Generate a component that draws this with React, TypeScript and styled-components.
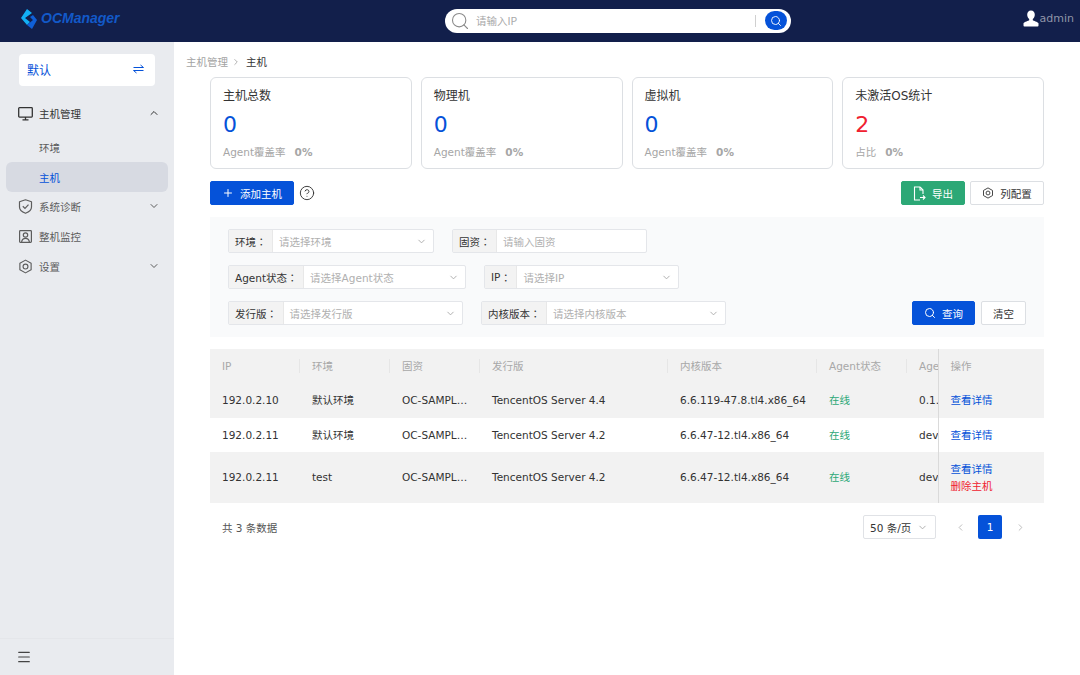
import React from 'react'
import styled, { createGlobalStyle } from 'styled-components'
import { ChevronDown, ChevronLeft, ChevronRight, ChevronUp, Plus, Search, CircleHelp, Menu } from 'lucide-react'

const FONT = `"DejaVu Sans", "Noto Sans CJK SC", sans-serif`

const GlobalStyle = createGlobalStyle`
  html, body {
    margin: 0;
    padding: 0;
    height: 100%;
    background: #fff;
    font-family: ${FONT};
  }
  * {
    box-sizing: border-box;
  }
`

const Page = styled.div`
  width: 1080px;
  height: 675px;
  display: flex;
  flex-direction: column;
  overflow: hidden;
`

const Header = styled.header`
  height: 42px;
  flex: none;
  background: #121f4b;
  display: grid;
  grid-template-columns: 425px 346px 1fr;
  align-items: center;
  padding: 0 6px 0 20px;
`

const LogoLink = styled.a`
  display: flex;
  align-items: center;
  gap: 3px;
  margin-top: -6px;
`

const LogoText = styled.span`
  font-family: "Liberation Sans", sans-serif;
  font-weight: 700;
  font-style: italic;
  font-size: 14px;
  color: #1259c8;
`

const SearchBar = styled.div`
  height: 24px;
  margin-top: -1px;
  border-radius: 12px;
  background: #fff;
  display: flex;
  align-items: center;
  padding: 0 4px 0 5px;
`

const SearchPlaceholder = styled.span`
  flex: 1;
  font-size: 10.5px;
  color: #a9a9a9;
  margin-left: 6px;
  font-family: "Noto Sans CJK SC", sans-serif;
`

const SearchDivider = styled.span`
  width: 1px;
  height: 12px;
  background: #d0d0d0;
  margin-right: 9px;
`

const SearchButton = styled.span`
  width: 22px;
  height: 19px;
  border-radius: 10px;
  background: #0552d9;
  color: #fff;
  display: flex;
  align-items: center;
  justify-content: center;
`

const UserBox = styled.div`
  justify-self: end;
  display: flex;
  align-items: center;
  gap: 1px;
  font-size: 11px;
  color: #8f95a8;
  margin-top: -6px;
`

const Body = styled.div`
  flex: 1;
  display: flex;
  min-height: 0;
`

const Sidebar = styled.aside`
  width: 174px;
  flex: none;
  background: #e9ebef;
  display: flex;
  flex-direction: column;
  padding: 12px 6px 0;
`

const EnvSwitch = styled.div`
  height: 32px;
  margin: 0 13px;
  background: #fff;
  border-radius: 4px;
  display: flex;
  align-items: center;
  justify-content: space-between;
  padding: 0 11px 2px 8px;
  font-size: 12px;
  color: #0552d9;
`

const NavList = styled.nav`
  margin-top: 13px;
  flex: 1;
  display: flex;
  flex-direction: column;
`

const SubNav = styled.div`
  padding-top: 3px;
`

const NavItem = styled.div<{ $open?: boolean }>`
  height: 30px;
  display: flex;
  align-items: center;
  gap: 6px;
  padding: 0 8px 2px 12px;
  font-size: 10.5px;
  color: ${({ $open }) => ($open ? '#333' : '#5c5c5c')};
`

const SubNavItem = styled.div<{ $active?: boolean }>`
  height: 30px;
  display: flex;
  align-items: center;
  padding-left: 33px;
  border-radius: 6px;
  font-size: 10.5px;
  color: ${({ $active }) => ($active ? '#0552d9' : '#5c5c5c')};
  background: ${({ $active }) => ($active ? '#d7dae2' : 'transparent')};
`

const NavLabel = styled.span`
  flex: 1;
`

const Collapse = styled.div`
  height: 37px;
  margin: 0 -6px;
  border-top: 1px solid #e4e6ea;
  padding-left: 16px;
  display: flex;
  align-items: center;
  color: #444;
`

const Main = styled.main`
  flex: 1;
  min-width: 0;
  padding: 0 36px;
  display: flex;
  flex-direction: column;
`

const Breadcrumb = styled.div`
  height: 35px;
  padding-top: 4px;
  margin-left: -24px;
  display: flex;
  align-items: center;
  gap: 3px;
  font-size: 10.5px;
  color: #a3a3a3;
`

const CrumbCurrent = styled.span`
  color: #333;
  margin-left: 2px;
`

const Cards = styled.div`
  display: grid;
  grid-template-columns: repeat(4, 1fr);
  gap: 9px;
`

const Card = styled.div`
  height: 92px;
  border: 1px solid #dcdfe3;
  border-radius: 6px;
  padding: 10px 12px;
  background: #fff;
`

const CardTitle = styled.div`
  font-size: 12px;
  line-height: 16px;
  color: #333;
`

const CardValue = styled.div<{ $danger?: boolean }>`
  font-size: 22px;
  line-height: 26px;
  margin-top: 8px;
  color: ${({ $danger }) => ($danger ? '#f0212f' : '#0552d9')};
`

const CardFoot = styled.div`
  margin-top: 7px;
  font-size: 10.5px;
  line-height: 14px;
  color: #a6a6a6;
  display: flex;
  gap: 9px;
`

const CardPercent = styled.b`
  font-weight: 700;
`

const Toolbar = styled.div`
  margin-top: 12px;
  height: 24px;
  display: flex;
  align-items: center;
  gap: 5px;
`

const ToolSpacer = styled.div`
  flex: 1;
`

const Button = styled.button<{ $kind?: 'primary' | 'success'; $w: number }>`
  height: 24px;
  border-radius: 2px;
  padding: 0;
  display: inline-flex;
  align-items: center;
  justify-content: center;
  gap: 6px;
  font-family: ${FONT};
  font-size: 10.5px;
  border: 1px solid ${({ $kind }) => ($kind === 'primary' ? '#0552d9' : $kind === 'success' ? '#2ca876' : '#dcdfe3')};
  background: ${({ $kind }) => ($kind === 'primary' ? '#0552d9' : $kind === 'success' ? '#2ca876' : '#fff')};
  color: ${({ $kind }) => ($kind ? '#fff' : '#333')};
  width: ${({ $w }) => $w}px;
`

const HelpIcon = styled.span`
  display: flex;
  color: #333;
`

const Filters = styled.section`
  margin-top: 12px;
  height: 120px;
  background: #f9fafb;
  padding: 12px 18px;
  display: flex;
  flex-direction: column;
  gap: 12px;
`

const FilterRow = styled.div`
  height: 24px;
  display: flex;
  gap: 18px;
`

const Field = styled.div<{ $w: number }>`
  width: ${({ $w }) => $w}px;
  height: 24px;
  display: flex;
  border: 1px solid #e4e6ea;
  border-radius: 2px;
  background: #fff;
  font-size: 10.5px;
`

const FieldLabel = styled.span`
  background: #f3f3f3;
  border-right: 1px solid #e8e8e8;
  color: #333;
  padding: 0 5.5px 0 6px;
  display: flex;
  align-items: center;
  white-space: pre;
`

const Colon = styled.span`
  font-family: "Noto Sans CJK TC", sans-serif;
`

const FieldInput = styled.span`
  flex: 1;
  display: flex;
  align-items: center;
  justify-content: space-between;
  padding: 0 6px;
  color: #b0b0b0;
`

const FilterActions = styled.div`
  margin-left: auto;
  display: flex;
  gap: 6px;
`

const TableWrap = styled.div`
  margin-top: 12px;
`

const DataTable = styled.table`
  width: 834px;
  table-layout: fixed;
  border-collapse: collapse;
  font-size: 10.5px;
`

const HeadRow = styled.tr`
  height: 34px;
  background: #f2f2f2;
`

const HeadCell = styled.th`
  padding: 0 12px 1px;
  text-align: left;
  font-weight: 400;
  color: #a8a8a8;
  white-space: nowrap;
  overflow: hidden;
  position: relative;
  &:nth-last-child(n + 3)::after {
    content: '';
    position: absolute;
    right: 0;
    top: 10px;
    bottom: 10px;
    width: 1px;
    background: #e6e6e6;
  }
`

const BodyRow = styled.tr<{ $h: number; $shade?: boolean }>`
  height: ${({ $h }) => $h}px;
  background: ${({ $shade }) => ($shade ? '#f2f2f2' : '#fff')};
`

const Cell = styled.td<{ $online?: boolean }>`
  padding: 0 12px 1px;
  line-height: 14px;
  color: ${({ $online }) => ($online ? '#2ca876' : '#333')};
  white-space: nowrap;
  overflow: hidden;
`

const ClippedCell = styled(Cell)`
  padding-right: 0;
  text-overflow: clip;
`

const EllipsisCell = styled(Cell)`
  text-overflow: ellipsis;
`

const ActionHead = styled(HeadCell)`
  border-left: 1px solid #dadada;
`

const ActionCell = styled(Cell)`
  border-left: 1px solid #dadada;
  padding-bottom: 0;
  line-height: 17px;
`

const ActionLink = styled.a<{ $danger?: boolean }>`
  display: block;
  color: ${({ $danger }) => ($danger ? '#f0212f' : '#0552d9')};
`

const Pager = styled.div`
  height: 24px;
  margin-top: 12px;
  padding: 0 12px;
  display: flex;
  align-items: center;
  gap: 6px;
  font-size: 10.5px;
  color: #555;
`

const PagerTotal = styled.span`
  flex: 1;
`

const PageSize = styled.div`
  width: 73px;
  height: 24px;
  margin-right: 6px;
  border: 1px solid #e0e2e6;
  border-radius: 2px;
  padding: 0 7px 0 6px;
  display: flex;
  align-items: center;
  justify-content: space-between;
  color: #333;
`

const PageArrow = styled.span`
  width: 24px;
  height: 24px;
  display: flex;
  align-items: center;
  justify-content: center;
  color: #b8b8b8;
`

const PageNumber = styled.span`
  width: 24px;
  height: 24px;
  border-radius: 2px;
  background: #0552d9;
  color: #fff;
  display: flex;
  align-items: center;
  justify-content: center;
`

const LogoMark = () => (
  <svg width="18" height="23" viewBox="0 0 18 23">
    <path d="M7 2 1 11l6 7 3-3-5-4 7-5z" fill="#12b0f5" />
    <path d="M13 8l4 5-5 9-5-4 6-5-3-3z" fill="#0f5fd8" />
  </svg>
)

const UserGlyph = () => (
  <svg width="16" height="17" viewBox="0 0 16 17">
    <path d="M8 0.5c2.4 0 3.8 1.9 3.8 4.2 0 1.9-.9 3.5-2 4.3v1.3c.6.6 4.7 1.5 5.7 3v2.2a.9.9 0 0 1-.9.9H1.4a.9.9 0 0 1-.9-.9v-2.2c1-1.5 5.1-2.4 5.7-3V9c-1.1-.8-2-2.4-2-4.3C4.2 2.4 5.6.5 8 .5z" fill="#fff" />
  </svg>
)

const HexGear = ({ size = 15 }: { size?: number }) => (
  <svg width={size} height={size} viewBox="0 0 16 16" fill="none" stroke="currentColor" strokeWidth="1.2">
    <path d="M8 1.2 14 4.6v6.8L8 14.8 2 11.400V4.600z" strokeLinejoin="round" />
    <circle cx="8" cy="8" r="2.6" />
  </svg>
)

const SwapGlyph = () => (
  <svg width="11" height="10" viewBox="0 0 11 10" fill="none" stroke="currentColor" strokeWidth="1">
    <path d="M0.5 3.5h10L7.5 1" />
    <path d="M10.5 6.5H0.5L3.5 9" />
  </svg>
)

const MonitorGlyph = () => (
  <svg width="15" height="15" viewBox="0 0 15 15" fill="none" stroke="currentColor" strokeWidth="1.3">
    <rect x="0.700" y="1.700" width="13.600" height="9.400" rx="0.800" />
    <path d="M7.500 11.100v2.700M4.500 13.800h6" />
  </svg>
)

const ShieldGlyph = () => (
  <svg width="15" height="15" viewBox="0 0 15 15" fill="none" stroke="currentColor" strokeWidth="1.2">
    <path d="M7.500 0.800 13.500 2.800V8c0 3-2.500 5-6 6.300C4 13 1.500 11 1.500 8V2.800z" strokeLinejoin="round" />
    <path d="M4.800 7.300 7 9.400l3.500-3.700" />
  </svg>
)

const ProfileGlyph = () => (
  <svg width="15" height="15" viewBox="0 0 15 15" fill="none" stroke="currentColor" strokeWidth="1.2">
    <rect x="1.6" y="1.6" width="11.8" height="11.8" rx="0.8" />
    <circle cx="7.5" cy="6" r="2.2" />
    <path d="M3.6 13c.4-2.4 1.9-3.6 3.9-3.6s3.500 1.200 3.900 3.600" />
  </svg>
)

const ExportGlyph = () => (
  <svg width="13" height="15" viewBox="0 0 13 15" fill="none" stroke="currentColor" strokeWidth="1.1">
    <path d="M7 1H1.500v13H7" />
    <path d="M7 1l3 3v4" />
    <path d="M7 1v3h3" />
    <path d="M7 11.500h5M10 9.500l2 2-2 2" />
  </svg>
)

const Caret = () => <ChevronDown size={11} color="#aaa" />

const columns = [
  { label: 'IP', w: 90 },
  { label: '环境', w: 90 },
  { label: '固资', w: 90 },
  { label: '发行版', w: 188 },
  { label: '内核版本', w: 149 },
  { label: 'Agent状态', w: 90 },
  { label: 'Agent版本', w: 31 }
]

const rows = [
  { ip: '192.0.2.10', env: '默认环境', os: 'TencentOS Server 4.4', kernel: '6.6.119-47.8.tl4.x86_64', ver: '0.1.0', h: 35, shade: true },
  { ip: '192.0.2.11', env: '默认环境', os: 'TencentOS Server 4.2', kernel: '6.6.47-12.tl4.x86_64', ver: 'dev', h: 34 },
  { ip: '192.0.2.11', env: 'test', os: 'TencentOS Server 4.2', kernel: '6.6.47-12.tl4.x86_64', ver: 'dev', h: 51, shade: true, removable: true }
]

const stats = [
  { title: '主机总数', value: 0, foot: 'Agent覆盖率' },
  { title: '物理机', value: 0, foot: 'Agent覆盖率' },
  { title: '虚拟机', value: 0, foot: 'Agent覆盖率' },
  { title: '未激活OS统计', value: 2, foot: '占比', danger: true }
]

export default function App() {
  return (
    <Page>
      <GlobalStyle />
      <Header>
        <LogoLink>
          <LogoMark />
          <LogoText>OCManager</LogoText>
        </LogoLink>
        <SearchBar>
          <Search size={20} color="#8a8a8a" strokeWidth={1.3} />
          <SearchPlaceholder>请输入IP</SearchPlaceholder>
          <SearchDivider />
          <SearchButton>
            <Search size={12} strokeWidth={1.8} />
          </SearchButton>
        </SearchBar>
        <UserBox>
          <UserGlyph />
          admin
        </UserBox>
      </Header>
      <Body>
        <Sidebar>
          <EnvSwitch>
            默认
            <SwapGlyph />
          </EnvSwitch>
          <NavList>
            <NavItem $open>
              <MonitorGlyph />
              <NavLabel>主机管理</NavLabel>
              <ChevronUp size={12} />
            </NavItem>
            <SubNav>
              <SubNavItem>环境</SubNavItem>
              <SubNavItem $active>主机</SubNavItem>
            </SubNav>
            <NavItem>
              <ShieldGlyph />
              <NavLabel>系统诊断</NavLabel>
              <ChevronDown size={12} />
            </NavItem>
            <NavItem>
              <ProfileGlyph />
              <NavLabel>整机监控</NavLabel>
            </NavItem>
            <NavItem>
              <HexGear />
              <NavLabel>设置</NavLabel>
              <ChevronDown size={12} />
            </NavItem>
          </NavList>
          <Collapse>
            <Menu size={16} strokeWidth={1.7} />
          </Collapse>
        </Sidebar>
        <Main>
          <Breadcrumb>
            主机管理
            <ChevronRight size={10} />
            <CrumbCurrent>主机</CrumbCurrent>
          </Breadcrumb>
          <Cards>
            {stats.map(s => (
              <Card key={s.title}>
                <CardTitle>{s.title}</CardTitle>
                <CardValue $danger={s.danger}>{s.value}</CardValue>
                <CardFoot>
                  {s.foot}
                  <CardPercent>0%</CardPercent>
                </CardFoot>
              </Card>
            ))}
          </Cards>
          <Toolbar>
            <Button $kind="primary" $w={84}>
              <Plus size={12} />
              添加主机
            </Button>
            <HelpIcon>
              <CircleHelp size={16} strokeWidth={1.4} />
            </HelpIcon>
            <ToolSpacer />
            <Button $kind="success" $w={64}>
              <ExportGlyph />
              导出
            </Button>
            <Button $w={74}>
              <HexGear size={12} />
              列配置
            </Button>
          </Toolbar>
          <Filters>
            <FilterRow>
              <Field $w={206}>
                <FieldLabel>环境<Colon>：</Colon></FieldLabel>
                <FieldInput>请选择环境<Caret /></FieldInput>
              </Field>
              <Field $w={195}>
                <FieldLabel>固资<Colon>：</Colon></FieldLabel>
                <FieldInput>请输入固资</FieldInput>
              </Field>
            </FilterRow>
            <FilterRow>
              <Field $w={238}>
                <FieldLabel>Agent状态<Colon>：</Colon></FieldLabel>
                <FieldInput>请选择Agent状态<Caret /></FieldInput>
              </Field>
              <Field $w={195}>
                <FieldLabel>IP<Colon>：</Colon></FieldLabel>
                <FieldInput>请选择IP<Caret /></FieldInput>
              </Field>
            </FilterRow>
            <FilterRow>
              <Field $w={235}>
                <FieldLabel>发行版<Colon>：</Colon></FieldLabel>
                <FieldInput>请选择发行版<Caret /></FieldInput>
              </Field>
              <Field $w={245}>
                <FieldLabel>内核版本<Colon>：</Colon></FieldLabel>
                <FieldInput>请选择内核版本<Caret /></FieldInput>
              </Field>
              <FilterActions>
                <Button $kind="primary" $w={63}>
                  <Search size={12} />
                  查询
                </Button>
                <Button $w={45}>清空</Button>
              </FilterActions>
            </FilterRow>
          </Filters>
          <TableWrap>
            <DataTable>
              <colgroup>
                {columns.map(c => <col key={c.label} width={c.w} />)}
                <col width={106} />
              </colgroup>
              <thead>
                <HeadRow>
                  {columns.map(c => <HeadCell key={c.label}>{c.label}</HeadCell>)}
                  <ActionHead>操作</ActionHead>
                </HeadRow>
              </thead>
              <tbody>
                {rows.map((r, i) => (
                  <BodyRow key={i} $h={r.h} $shade={r.shade}>
                    <Cell>{r.ip}</Cell>
                    <Cell>{r.env}</Cell>
                    <EllipsisCell>OC-SAMPLE-0001</EllipsisCell>
                    <Cell>{r.os}</Cell>
                    <Cell>{r.kernel}</Cell>
                    <Cell $online>在线</Cell>
                    <ClippedCell>{r.ver}</ClippedCell>
                    <ActionCell>
                      <ActionLink>查看详情</ActionLink>
                      {r.removable && <ActionLink $danger>删除主机</ActionLink>}
                    </ActionCell>
                  </BodyRow>
                ))}
              </tbody>
            </DataTable>
          </TableWrap>
          <Pager>
            <PagerTotal>共 3 条数据</PagerTotal>
            <PageSize>
              50 条/页
              <Caret />
            </PageSize>
            <PageArrow><ChevronLeft size={11} /></PageArrow>
            <PageNumber>1</PageNumber>
            <PageArrow><ChevronRight size={11} /></PageArrow>
          </Pager>
        </Main>
      </Body>
    </Page>
  )
}
